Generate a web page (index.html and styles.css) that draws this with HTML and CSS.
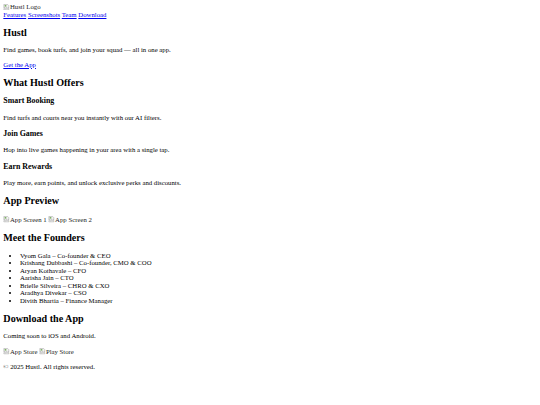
FILE: index.html
```html
<!DOCTYPE html>
<html lang="en">

<head>
  <meta charset="UTF-8">
  <title>Hustl</title>
  <link rel="stylesheet" href="styles.css">
</head>

<body>
  <header class="site-header">
    <div class="logo"><span class="img-alt"><svg class="broken" viewBox="0 0 16 16"><path d="M2 1h9l3 3v5l-2-1-2 2-2-2-2 2-2-2-2 2z" fill="#f2f2f2" stroke="#8a8a8a" stroke-width="1"/><path d="M2 12l2-2 2 2 2-2 2 2 2-2 2 1v3H2z" fill="#f2f2f2" stroke="#8a8a8a" stroke-width="1"/><rect x="4" y="3" width="4" height="3" fill="#5a9c3a"/></svg>Hustl Logo</span></div>
    <nav class="nav">
      <a href="#features">Features</a>
      <a href="#screenshots">Screenshots</a>
      <a href="#team">Team</a>
      <a href="#download">Download</a>
    </nav>
  </header>

  <section class="hero">
    <h1>Hustl</h1>
    <p>Find games, book turfs, and join your squad — all in one app.</p>
    <a href="#download">Get the App</a>
  </section>

  <section id="features" class="features">
    <h2>What Hustl Offers</h2>
    <div class="feature">
      <h3>Smart Booking</h3>
      <p>Find turfs and courts near you instantly with our AI filters.</p>
    </div>
    <div class="feature">
      <h3>Join Games</h3>
      <p>Hop into live games happening in your area with a single tap.</p>
    </div>
    <div class="feature">
      <h3>Earn Rewards</h3>
      <p>Play more, earn points, and unlock exclusive perks and discounts.</p>
    </div>
  </section>

  <section id="screenshots" class="screens">
    <h2>App Preview</h2>
    <div class="gallery">
      <span class="img-alt"><svg class="broken" viewBox="0 0 16 16"><path d="M2 1h9l3 3v5l-2-1-2 2-2-2-2 2-2-2-2 2z" fill="#f2f2f2" stroke="#8a8a8a" stroke-width="1"/><path d="M2 12l2-2 2 2 2-2 2 2 2-2 2 1v3H2z" fill="#f2f2f2" stroke="#8a8a8a" stroke-width="1"/><rect x="4" y="3" width="4" height="3" fill="#5a9c3a"/></svg>App Screen 1</span>
      <span class="img-alt"><svg class="broken" viewBox="0 0 16 16"><path d="M2 1h9l3 3v5l-2-1-2 2-2-2-2 2-2-2-2 2z" fill="#f2f2f2" stroke="#8a8a8a" stroke-width="1"/><path d="M2 12l2-2 2 2 2-2 2 2 2-2 2 1v3H2z" fill="#f2f2f2" stroke="#8a8a8a" stroke-width="1"/><rect x="4" y="3" width="4" height="3" fill="#5a9c3a"/></svg>App Screen 2</span>
    </div>
  </section>

  <section id="team" class="team">
    <h2>Meet the Founders</h2>
    <ul>
      <li>Vyom Gala – Co-founder &amp; CEO</li>
      <li>Krishang Dubbashi – Co-founder, CMO &amp; COO</li>
      <li>Aryan Kothavale – CFO</li>
      <li>Aarisha Jain – CTO</li>
      <li>Brielle Silveira – CHRO &amp; CXO</li>
      <li>Aradhya Divekar – CSO</li>
      <li>Divith Bhartia – Finance Manager</li>
    </ul>
  </section>

  <section id="download" class="download">
    <h2>Download the App</h2>
    <p>Coming soon to iOS and Android.</p>
    <div class="stores">
      <span class="img-alt"><svg class="broken" viewBox="0 0 16 16"><path d="M2 1h9l3 3v5l-2-1-2 2-2-2-2 2-2-2-2 2z" fill="#f2f2f2" stroke="#8a8a8a" stroke-width="1"/><path d="M2 12l2-2 2 2 2-2 2 2 2-2 2 1v3H2z" fill="#f2f2f2" stroke="#8a8a8a" stroke-width="1"/><rect x="4" y="3" width="4" height="3" fill="#5a9c3a"/></svg>App Store</span>
      <span class="img-alt"><svg class="broken" viewBox="0 0 16 16"><path d="M2 1h9l3 3v5l-2-1-2 2-2-2-2 2-2-2-2 2z" fill="#f2f2f2" stroke="#8a8a8a" stroke-width="1"/><path d="M2 12l2-2 2 2 2-2 2 2 2-2 2 1v3H2z" fill="#f2f2f2" stroke="#8a8a8a" stroke-width="1"/><rect x="4" y="3" width="4" height="3" fill="#5a9c3a"/></svg>Play Store</span>
    </div>
  </section>

  <footer class="footer">
    <p>© 2025 Hustl. All rights reserved.</p>
  </footer>
</body>

</html>
```

FILE: styles.css
```css
body {
  font-family: "Liberation Serif", "Times New Roman", serif;
  font-size: 6.75px;
  line-height: 7.5px;
  margin: 3.333px;
  color: #000000;
  background-color: #ffffff;
}

a {
  color: #0000ee;
}

/* h1 sits inside a section, so it gets the h2 size */
h1,
h2 {
  font-size: 1.5em;
  line-height: 11.25px;
  margin: 0.83em 0;
}

h3 {
  font-size: 1.17em;
  line-height: 9.5px;
  margin: 1em 0;
}

p {
  margin: 1em 0;
}

ul {
  margin: 1em 0;
  padding-left: 16.667px;
}

.gallery,
.stores {
  line-height: 9.2px;
}

.img-alt {
  color: #222222;
}

.broken {
  width: 6.667px;
  height: 6.667px;
  vertical-align: -1px;
}
```
